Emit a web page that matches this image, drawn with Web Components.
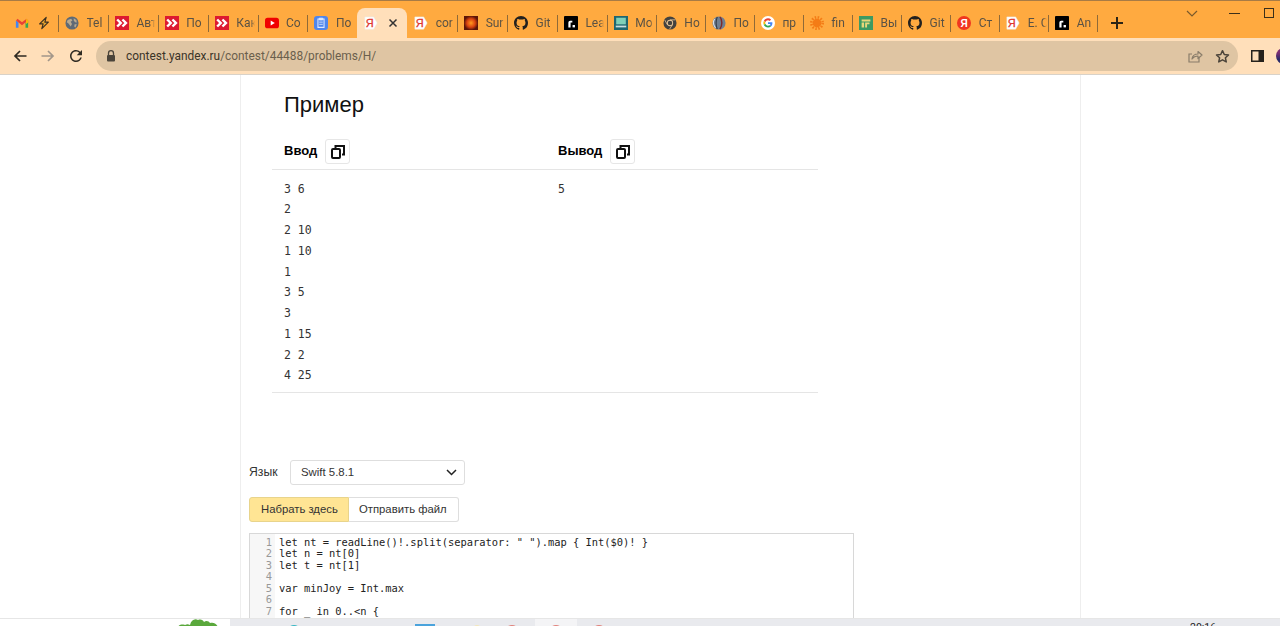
<!DOCTYPE html>
<html lang="ru">
<head>
<meta charset="utf-8">
<title>contest.yandex.ru</title>
<style>
  html, body { margin: 0; height: 100%; overflow: hidden; background: #fff; }
  body { display: flex; flex-direction: column; font-family: "Liberation Sans", Arial, sans-serif; }
  contest-page { flex: 1; min-height: 0; }
</style>
</head>
<body>
  <browser-tabs>
    <browser-tab icon="globe">Tel</browser-tab>
    <browser-tab icon="zen">Авт</browser-tab>
    <browser-tab icon="zen">По</browser-tab>
    <browser-tab icon="zen">Как</browser-tab>
    <browser-tab icon="youtube">Со</browser-tab>
    <browser-tab icon="doc">По</browser-tab>
    <browser-tab icon="yandex" active></browser-tab>
    <browser-tab icon="yandex" plain>cor</browser-tab>
    <browser-tab icon="sur">Sur</browser-tab>
    <browser-tab icon="github">Git</browser-tab>
    <browser-tab icon="rdot">Lea</browser-tab>
    <browser-tab icon="monitor" narrow>Mo</browser-tab>
    <browser-tab icon="chrome" narrow>Ho</browser-tab>
    <browser-tab icon="sphere" narrow>По</browser-tab>
    <browser-tab icon="google" narrow>пр</browser-tab>
    <browser-tab icon="sun" narrow>fin</browser-tab>
    <browser-tab icon="sheet" narrow>Вы</browser-tab>
    <browser-tab icon="github" narrow>Git</browser-tab>
    <browser-tab icon="yacircle" narrow>Ст</browser-tab>
    <browser-tab icon="yandex" narrow>Е. С</browser-tab>
    <browser-tab icon="rdot" narrow>An</browser-tab>
  </browser-tabs>
  <browser-toolbar url-host="contest.yandex.ru" url-path="/contest/44488/problems/H/"></browser-toolbar>
  <contest-page>
    <example-table input="3 6&#10;2&#10;2 10&#10;1 10&#10;1&#10;3 5&#10;3&#10;1 15&#10;2 2&#10;4 25" output="5"></example-table>
    <submit-form language="Swift 5.8.1">
      <code-box>let nt = readLine()!.split(separator: " ").map { Int($0)! }
let n = nt[0]
let t = nt[1]

var minJoy = Int.max

for _ in 0..&lt;n {</code-box>
    </submit-form>
  </contest-page>
  <task-bar></task-bar>

<script>
const FAVICONS = {
  gmail: `<path d="M1 13.5V5l3 2.4v6.1z" fill="#4285f4"/><path d="M12 13.5V7.4L15 5v8.5z" fill="#34a853"/><path d="M2 4.2 8 8.8l6-4.6" fill="none" stroke="#ea4335" stroke-width="2.6"/><path d="M12.6 3.2 15 5v2.4l-2.4 1.7z" fill="#fbbc04"/>`,
  bolt: `<path d="M10.5 1.5 3 9h4l-1.5 5.5L13 7H9z" fill="#e9a42e" stroke="#3a3020" stroke-width="1.3" stroke-linejoin="round"/>`,
  globe: `<circle cx="8" cy="8" r="7.5" fill="#5f6a76"/><path d="M3 4.5 7 3l1.5 2-2 1.5L8 9l-1.5 3L4 8.5 2 7zM10 2.5l3 2 .5 3-2-.5L10 5zM11 9.5h2.5L12 13l-1.5-1z" fill="#b9a98f"/>`,
  zen: `<rect width="16" height="16" fill="#dd1a30"/><path d="M2.5 4 6.5 8l-4 4M8.5 4l4 4-4 4" fill="none" stroke="#fff" stroke-width="2.8"/>`,
  youtube: `<rect y="2" width="16" height="12" rx="3" fill="#f00000"/><path d="M6.5 5.2v5.6L11.2 8z" fill="#fff"/>`,
  doc: `<rect width="16" height="16" rx="3.5" fill="#4f86ec"/><path d="M4.5 3.5h7V13h-7z" fill="none" stroke="#dce8ff" stroke-width="1.2"/><path d="M6 2.5h4v2H6zM6 7h4M6 9.5h4" fill="#dce8ff" stroke="#dce8ff"/>`,
  yandex: `<path d="M1 1h10l4 7-4 7H1z" fill="#fff" stroke="#eee" stroke-width=".6"/><text x="6.5" y="12.5" font-family="Liberation Sans, sans-serif" font-size="12.5" text-anchor="middle" fill="#e0352b" stroke="#e0352b" stroke-width=".3">Я</text>`,
  sur: `<defs><radialGradient id="s"><stop offset="0" stop-color="#ff9a1e"/><stop offset=".6" stop-color="#d9420f"/><stop offset="1" stop-color="#5c1508"/></radialGradient></defs><rect width="16" height="16" fill="url(#s)"/>`,
  github: `<path fill="#23211f" d="M8 0C3.58 0 0 3.58 0 8c0 3.54 2.29 6.53 5.47 7.59.4.07.55-.17.55-.38 0-.19-.01-.82-.01-1.49-2.01.37-2.53-.49-2.69-.94-.09-.23-.48-.94-.82-1.13-.28-.15-.68-.52-.01-.53.63-.01 1.08.58 1.23.82.72 1.21 1.87.87 2.33.66.07-.52.28-.87.51-1.07-1.78-.2-3.64-.89-3.64-3.95 0-.87.31-1.59.82-2.15-.08-.2-.36-1.02.08-2.12 0 0 .67-.21 2.2.82.64-.18 1.32-.27 2-.27.68 0 1.36.09 2 .27 1.53-1.04 2.2-.82 2.2-.82.44 1.1.16 1.92.08 2.12.51.56.82 1.27.82 2.15 0 3.07-1.87 3.75-3.65 3.95.29.25.54.73.54 1.48 0 1.07-.01 1.93-.01 2.2 0 .21.15.46.55.38A8.013 8.013 0 0016 8c0-4.42-3.58-8-8-8z"/>`,
  rdot: `<rect width="16" height="16" rx="1" fill="#000"/><path d="M5 13V7.5Q5 5.5 7 5.5H9.5V7.5H7.5V13z" fill="#fff"/><rect x="9.8" y="10.3" width="2.7" height="2.7" fill="#fff"/>`,
  monitor: `<rect width="16" height="16" fill="#1f6670"/><rect x="2.5" y="2" width="11" height="7.5" fill="#7fd0b8"/><rect x="2" y="11" width="12" height="2" fill="#c8dede"/>`,
  chrome: `<circle cx="8" cy="8" r="7.5" fill="#43423f"/><circle cx="8" cy="8" r="3.6" fill="#e9c89a"/><circle cx="8" cy="8" r="2.6" fill="#43423f"/><path d="M8 4.4h6.2M5 10 2 4.5M10.8 10 7.5 15" stroke="#e9c89a" stroke-width=".9"/>`,
  sphere: `<circle cx="8" cy="8" r="7.5" fill="#6f7f92"/><path d="M9 1c3 3 3 10 0 14" fill="none" stroke="#7d2a2a" stroke-width="1.6"/><path d="M3 3.5c-2 3-1.5 7 1 10" fill="none" stroke="#dfe5ea" stroke-width="1.2"/><path d="M6 1c-1.5 4-1.5 10 0 14" fill="none" stroke="#343c48" stroke-width="1.3"/>`,
  google: `<circle cx="8" cy="8" r="8" fill="#fff"/><g transform="translate(2.7 2.7) scale(.22)"><path fill="#EA4335" d="M24 9.5c3.54 0 6.71 1.22 9.21 3.6l6.85-6.85C35.9 2.38 30.47 0 24 0 14.62 0 6.51 5.38 2.56 13.22l7.98 6.19C12.43 13.72 17.74 9.5 24 9.5z"/><path fill="#4285F4" d="M46.98 24.55c0-1.57-.15-3.09-.38-4.55H24v9.02h12.94c-.58 2.96-2.26 5.48-4.78 7.18l7.73 6c4.51-4.18 7.09-10.36 7.09-17.65z"/><path fill="#FBBC05" d="M10.53 28.59c-.48-1.45-.76-2.99-.76-4.59s.27-3.14.76-4.59l-7.98-6.19C.92 16.46 0 20.12 0 24c0 3.88.92 7.54 2.56 10.78l7.97-6.19z"/><path fill="#34A853" d="M24 48c6.48 0 11.93-2.13 15.89-5.81l-7.73-6c-2.15 1.45-4.92 2.3-8.16 2.3-6.26 0-11.57-4.22-13.47-9.91l-7.98 6.19C6.51 42.62 14.62 48 24 48z"/></g>`,
  sun: `<circle cx="8" cy="8" r="5" fill="#f47c16"/><circle cx="8" cy="8" r="6.5" fill="none" stroke="#f47c16" stroke-width="3" stroke-dasharray="1.7 1.7"/>`,
  sheet: `<rect width="16" height="16" fill="#3d9a62"/><path d="M3 4h10v2.2H3zM3 7.5h2.8V13H3zM7 7.5h5v2H9.2V13H7z" fill="#e8d77a"/>`,
  yacircle: `<circle cx="8" cy="8" r="8" fill="#f0361f"/><text x="8" y="12.3" font-family="Liberation Sans, sans-serif" font-weight="700" font-size="11.5" text-anchor="middle" fill="#fff">Я</text>`,
};

class TabIcon extends HTMLElement {
  constructor() {
    super();
    const name = this.getAttribute('name');
    this.attachShadow({mode: 'open'}).innerHTML = `
      <style>
        :host { display: block; width: 14px; height: 14px; flex: none; }
        svg { display: block; }
      </style>
      <svg width="14" height="14" viewBox="0 0 16 16">${FAVICONS[name] || ''}</svg>`;
  }
}
customElements.define('tab-icon', TabIcon);

class BrowserTab extends HTMLElement {
  constructor() {
    super();
    const active = this.hasAttribute('active');
    this.attachShadow({mode: 'open'}).innerHTML = `
      <style>
        :host {
          display: flex;
          align-items: center;
          box-sizing: border-box;
          width: 49.9px;
          height: 30px;
          padding: 0 0 1px 7px;
          flex: none;
          background: linear-gradient(#8f6a38, #8f6a38) left 7px / 1px 17px no-repeat;
        }
        :host([narrow]) { width: 49.05px; }
        :host([plain]) { background: none; }
        :host([active]) {
          background: #ffdfba;
          border-radius: 8px 8px 0 0;
        }
        .label {
          display: block;
          width: 19px;
          margin-left: 7.5px;
          overflow: hidden;
          white-space: nowrap;
          font: 12px Roboto, sans-serif;
          color: #5a5244;
          -webkit-mask-image: linear-gradient(90deg, #000 78%, transparent);
          mask-image: linear-gradient(90deg, #000 78%, transparent);
        }
        .close { margin-left: 10px; flex: none; }
      </style>
      <tab-icon name="${this.getAttribute('icon')}"></tab-icon>
      ${active
        ? `<svg class="close" width="10" height="10" viewBox="0 0 10 10"><path d="M1.5 1.5l7 7m0-7l-7 7" stroke="#333" stroke-width="1.5"/></svg>`
        : `<span class="label"><slot></slot></span>`}`;
  }
}
customElements.define('browser-tab', BrowserTab);

const tabsTemplate = document.createElement('template');
tabsTemplate.innerHTML = `
  <style>
    :host {
      display: flex;
      align-items: flex-end;
      box-sizing: border-box;
      height: 38px;
      flex: none;
      background: #ffaa40;
      border-top: 1px solid #a87b45;
      overflow: hidden;
    }
    .pinned {
      display: flex;
      gap: 8px;
      align-items: center;
      box-sizing: border-box;
      width: 58px;
      height: 30px;
      padding: 0 0 1px 15px;
      flex: none;
    }
    .end { width: 1px; height: 17px; margin-bottom: 6px; background: #8f6a38; flex: none; }
    .plus { margin: 0 0 8px 12px; flex: none; }
    .controls {
      display: flex;
      align-items: center;
      align-self: flex-start;
      margin: 7px 0 0 62px;
      flex: none;
    }
    .controls svg { display: block; flex: none; }
    .controls .min { margin-left: 31px; }
    .controls .max { margin-left: 24px; }
  </style>
  <div class="pinned"><tab-icon name="gmail"></tab-icon><tab-icon name="bolt"></tab-icon></div>
  <slot></slot>
  <div class="end"></div>
  <svg class="plus" width="14" height="14" viewBox="0 0 14 14"><path d="M7 1v12M1 7h12" stroke="#2b2416" stroke-width="2"/></svg>
  <div class="controls">
    <svg width="12" height="10" viewBox="0 0 12 10"><path d="M1 2l5 5 5-5" fill="none" stroke="#7a5a2c" stroke-width="1.2"/></svg>
    <svg class="min" width="11" height="10" viewBox="0 0 11 10"><path d="M0 4.5h11" stroke="#3b2f1a" stroke-width="1"/></svg>
    <svg class="max" width="11" height="11" viewBox="0 0 11 11"><rect x=".5" y=".5" width="9" height="9" fill="none" stroke="#3b2f1a"/></svg>
  </div>
`;

class BrowserTabs extends HTMLElement {
  constructor() {
    super();
    this.attachShadow({mode: 'open'}).appendChild(tabsTemplate.content.cloneNode(true));
  }
}
customElements.define('browser-tabs', BrowserTabs);

class BrowserToolbar extends HTMLElement {
  constructor() {
    super();
    this.attachShadow({mode: 'open'}).innerHTML = `
      <style>
        :host {
          display: flex;
          align-items: center;
          box-sizing: border-box;
          height: 37px;
          flex: none;
          padding: 0 0 0 12px;
          background: #ffdfba;
          border-bottom: 1px solid #d9d2c8;
          overflow: hidden;
        }
        svg { display: block; flex: none; }
        .fwd { margin-left: 12px; }
        .reload { margin: 0 11px; }
        .omnibox {
          display: flex;
          align-items: center;
          flex: none;
          box-sizing: border-box;
          width: 1142px;
          height: 30px;
          padding: 0 8px 0 9px;
          border-radius: 15px;
          background: #dfc5a3;
          font: 11.9px Roboto, sans-serif;
          color: #6b5f4d;
        }
        .host { color: #3b3428; }
        .url { margin-left: 9px; flex: 1; white-space: nowrap; }
        .star { margin-left: 12px; }
        .side { margin-left: 13px; }
        .avatar {
          width: 16px; height: 16px; margin-left: 12px; flex: none;
          border-radius: 50%;
          background: linear-gradient(#7a2d72 30%, #2b2b6b 70%);
        }
      </style>
      <svg width="16" height="16" viewBox="0 0 16 16"><path d="M14.5 8H3M8 3 3 8l5 5" fill="none" stroke="#2f2a22" stroke-width="1.7"/></svg>
      <svg class="fwd" width="16" height="16" viewBox="0 0 16 16"><path d="M1.5 8H13M8 3l5 5-5 5" fill="none" stroke="#a3978a" stroke-width="1.7"/></svg>
      <svg class="reload" width="18" height="18" viewBox="0 0 24 24"><path fill="#2f2a22" d="M17.65 6.35A7.958 7.958 0 0012 4c-4.42 0-7.99 3.58-7.99 8s3.57 8 7.99 8c3.73 0 6.84-2.55 7.73-6h-2.08A5.99 5.99 0 0112 18c-3.31 0-6-2.69-6-6s2.69-6 6-6c1.66 0 3.14.69 4.22 1.78L13 11h7V4l-2.35 2.35z"/></svg>
      <div class="omnibox">
        <svg width="12" height="14" viewBox="0 0 12 14"><path d="M3.5 6V4.2a2.5 2.5 0 015 0V6" fill="none" stroke="#4b443a" stroke-width="1.3"/><rect x="2" y="6" width="8" height="6.5" rx="1" fill="#4b443a"/></svg>
        <span class="url"><span class="host">${this.getAttribute('url-host')}</span>${this.getAttribute('url-path')}</span>
        <svg width="16" height="16" viewBox="0 0 16 16"><path d="M12 9.5V14H2V6h3" fill="none" stroke="#8a7d6a" stroke-width="1.2"/><path d="M5 11c.5-3.5 3-5 6-5V3.5L15 7l-4 3.5V8c-2.5 0-4.5.8-6 3z" fill="none" stroke="#8a7d6a" stroke-width="1.2" stroke-linejoin="round"/></svg>
        <svg class="star" width="15" height="15" viewBox="0 0 16 16"><path d="M8 1.8l1.9 4.1 4.5.5-3.3 3 .9 4.4L8 11.6l-4 2.2.9-4.4-3.3-3 4.5-.5z" fill="none" stroke="#4b443a" stroke-width="1.6" stroke-linejoin="round"/></svg>
      </div>
      <svg class="side" width="13" height="14" viewBox="0 0 13 14"><rect x=".75" y="1.75" width="11.5" height="10.5" fill="none" stroke="#26221c" stroke-width="1.5"/><rect x="7.5" y="1.75" width="5" height="10.5" fill="#26221c"/></svg>
      <div class="avatar"></div>`;
  }
}
customElements.define('browser-toolbar', BrowserToolbar);

const copyIcon = `<svg width="14" height="14" viewBox="0 0 14 14"><path d="M4.5 3V1H13v8.5H11" fill="none" stroke="#111" stroke-width="2"/><rect x="1" y="4" width="8" height="9" rx="1" fill="none" stroke="#111" stroke-width="2"/></svg>`;

class ExampleTable extends HTMLElement {
  constructor() {
    super();
    this.attachShadow({mode: 'open'}).innerHTML = `
      <style>
        :host {
          display: block;
          width: 546px;
          margin-left: 31px;
          padding-top: 17px;
          color: #000;
        }
        h2 {
          margin: 0 0 21px 12px;
          font: 400 22px/26px "Liberation Sans", Arial, sans-serif;
          color: #111;
        }
        .head, .body { display: grid; grid-template-columns: 274px 1fr; padding-left: 12px; }
        .head { padding-bottom: 5px; border-bottom: 1px solid #e5e5e5; }
        .cell { display: flex; align-items: center; gap: 8px; font: 700 13px/20px "Liberation Sans", Arial, sans-serif; }
        .cell span { margin-bottom: 2px; }
        button {
          display: flex;
          align-items: center;
          justify-content: center;
          box-sizing: border-box;
          width: 25px;
          height: 25px;
          padding: 0;
          background: #fff;
          border: 1px solid #e6e6e6;
          border-radius: 3px;
        }
        .body { padding-top: 8.5px; padding-bottom: 5.5px; border-bottom: 1px solid #e5e5e5; }
        pre {
          margin: 0;
          font: 11.5px/20.75px "DejaVu Sans Mono", monospace;
          color: #333;
        }
      </style>
      <h2>Пример</h2>
      <div class="head">
        <div class="cell"><span>Ввод</span><button>${copyIcon}</button></div>
        <div class="cell"><span>Вывод</span><button>${copyIcon}</button></div>
      </div>
      <div class="body">
        <pre>${this.getAttribute('input')}</pre>
        <pre>${this.getAttribute('output')}</pre>
      </div>`;
  }
}
customElements.define('example-table', ExampleTable);

class SubmitForm extends HTMLElement {
  constructor() {
    super();
    this.attachShadow({mode: 'open'}).innerHTML = `
      <style>
        :host {
          display: block;
          margin: 67px 0 0 8px;
          font: 11.4px "Liberation Sans", Arial, sans-serif;
          color: #333;
        }
        .lang { display: flex; align-items: center; }
        label { width: 41px; font-size: 12.2px; }
        .select {
          display: flex;
          align-items: center;
          justify-content: space-between;
          box-sizing: border-box;
          width: 175px;
          height: 25px;
          padding: 0 7px 0 10px;
          background: #fff;
          border: 1px solid #dedede;
          border-radius: 3px;
        }
        .select svg { display: block; }
        .switch { display: flex; margin: 12px 0 11px; font-size: 11.3px; }
        .switch span {
          box-sizing: border-box;
          width: 110px;
          height: 25px;
          padding-left: 10px;
          line-height: 23px;
          white-space: nowrap;
          border: 1px solid #dedede;
          border-left: 0;
          border-radius: 0 3px 3px 0;
        }
        .switch .on {
          width: 100px;
          padding-left: 11px;
          background: #ffe594;
          border: 1px solid #e8d48c;
          border-radius: 3px 0 0 3px;
        }
      </style>
      <div class="lang">
        <label>Язык</label>
        <div class="select">
          <span>${this.getAttribute('language')}</span>
          <svg width="11" height="7" viewBox="0 0 11 7"><path d="M1 1l4.5 4.5L10 1" fill="none" stroke="#222" stroke-width="1.5"/></svg>
        </div>
      </div>
      <div class="switch"><span class="on">Набрать здесь</span><span>Отправить файл</span></div>
      <slot></slot>`;
  }
}
customElements.define('submit-form', SubmitForm);

class CodeBox extends HTMLElement {
  constructor() {
    super();
    const count = this.textContent.split('\n').length;
    const numbers = Array.from({length: count}, (_, i) => `<span>${i + 1}</span>`).join('');
    this.attachShadow({mode: 'open'}).innerHTML = `
      <style>
        :host {
          display: flex;
          box-sizing: border-box;
          width: 605px;
          height: 200px;
          border: 1px solid #d8d8d8;
          font: 10.4px/11.5px "DejaVu Sans Mono", monospace;
          color: #222;
        }
        .gutter {
          display: flex;
          flex-direction: column;
          align-items: flex-end;
          box-sizing: border-box;
          width: 25px;
          padding: 3.2px 3px 0 0;
          background: #f7f7f7;
          color: #999;
          flex: none;
        }
        .code { margin: 0; padding: 3.2px 0 0 4px; font: inherit; white-space: pre; }
      </style>
      <div class="gutter">${numbers}</div>
      <div class="code"><slot></slot></div>`;
  }
}
customElements.define('code-box', CodeBox);

class ContestPage extends HTMLElement {
  constructor() {
    super();
    this.attachShadow({mode: 'open'}).innerHTML = `
      <style>
        :host { display: block; overflow: hidden; background: #fff; }
        .column {
          box-sizing: border-box;
          width: 841px;
          height: 100%;
          margin-left: 240px;
          border-left: 1px solid #eee;
          border-right: 1px solid #eee;
          overflow: hidden;
        }
      </style>
      <div class="column"><slot></slot></div>`;
  }
}
customElements.define('contest-page', ContestPage);

class TaskBar extends HTMLElement {
  constructor() {
    super();
    this.attachShadow({mode: 'open'}).innerHTML = `
      <style>
        :host {
          display: flex;
          box-sizing: border-box;
          height: 8px;
          flex: none;
          overflow: hidden;
          background: #e9eaee;
          border-top: 1px solid #e6e6e6;
        }
        .desk { width: 230px; background: #fff; flex: none; display: flex; justify-content: flex-end; }
        .desk svg { margin-right: 8px; }
        .dot { width: 16px; height: 18px; margin-top: 6px; border-radius: 50%; flex: none; }
        .box { width: 20px; height: 18px; margin-top: 5px; flex: none; }
        .open { display: flex; justify-content: center; width: 42px; margin-left: 15px; background: #f4f4f6; flex: none; }
        .time { margin: 2px 0 0 583px; font: 10.5px/14px Roboto, sans-serif; color: #222; flex: none; }
      </style>
      <div class="desk">
        <svg width="44" height="8" viewBox="0 0 44 8"><path d="M0 8c1-3 6-3 7-2 2-1 3-1 5 0 1-5 5-7 8-5 3-1 5 0 6 2 2-2 5-1 6 1 3-1 6 0 8 4z" fill="#5aa83c"/></svg>
      </div>
      <div class="dot" style="margin-left:56px;background:#35b6c4"></div>
      <div class="box" style="margin-left:113px;background:#4aa3dc"></div>
      <div class="dot" style="margin-left:36px;width:12px;background:#f4e6b8"></div>
      <div class="dot" style="margin-left:21px;background:#e0807a"></div>
      <div class="open"><div class="dot" style="background:#e0807a"></div></div>
      <div class="dot" style="margin-left:14px;background:#e0807a"></div>
      <div class="time">20:16</div>`;
  }
}
customElements.define('task-bar', TaskBar);
</script>
</body>
</html>
